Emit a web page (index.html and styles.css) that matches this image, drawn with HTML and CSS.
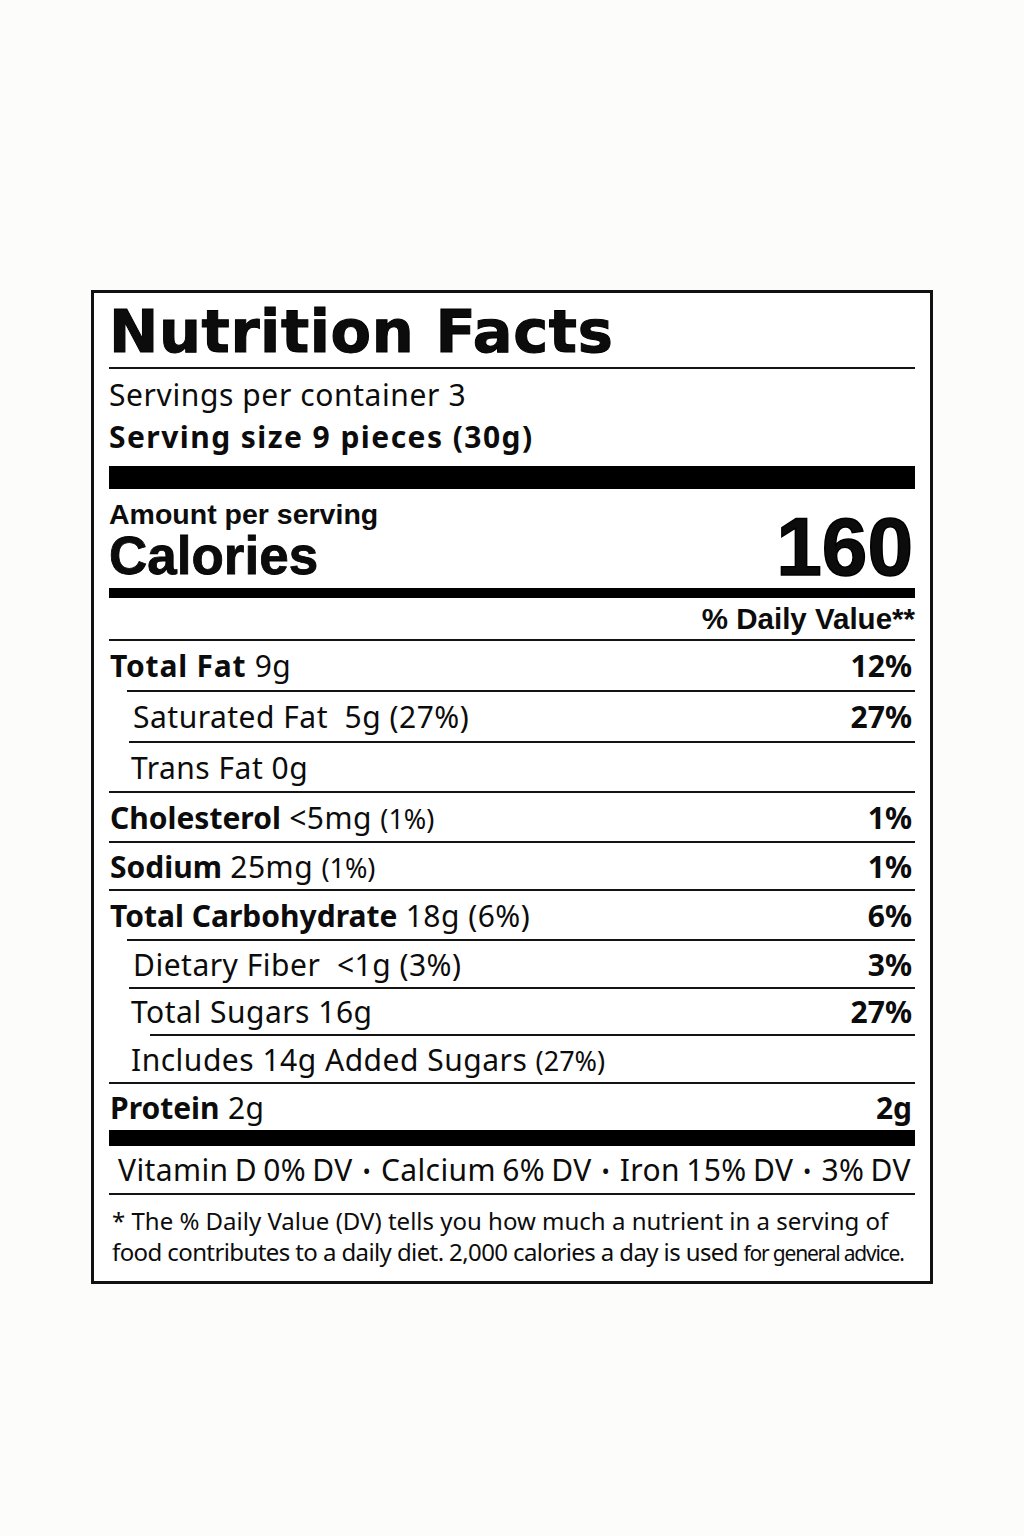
FILE: index.html
```html
<!DOCTYPE html>
<html lang="en">
<head>
<meta charset="utf-8">
<title>Nutrition Facts</title>
<link rel="stylesheet" href="styles.css">
</head>
<body>
<section class="label">
  <h1 class="title">Nutrition Facts</h1>
  <div class="rule"></div>
  <div class="serving">
    <p class="servings">Servings per container 3</p>
    <p class="size">Serving size 9 pieces (30g)</p>
  </div>
  <div class="bar bar--thick"></div>
  <div class="calories">
    <div class="cal-left">
      <p class="amount">Amount per serving</p>
      <p class="cal-word">Calories</p>
    </div>
    <p class="cal-num">160</p>
  </div>
  <div class="bar bar--mid"></div>
  <p class="dv-head">% Daily Value**</p>
  <div class="rule"></div>

  <div class="row row--h49"><span class="name"><b class="wide">Total Fat</b> 9g</span><b class="pct">12%</b></div>
  <div class="rule rule--sub"></div>
  <div class="row row--sub row--h49"><span class="name">Saturated Fat&nbsp; 5g (27%)</span><b class="pct">27%</b></div>
  <div class="rule rule--sub2"></div>
  <div class="row row--sub2 row--h48"><span class="name">Trans Fat 0g</span></div>
  <div class="rule"></div>
  <div class="row row--h48"><span class="name"><b>Cholesterol</b> &lt;5mg <small>(1%)</small></span><b class="pct">1%</b></div>
  <div class="rule"></div>
  <div class="row row--h46"><span class="name"><b>Sodium</b> 25mg <small>(1%)</small></span><b class="pct">1%</b></div>
  <div class="rule"></div>
  <div class="row row--h48"><span class="name"><b>Total Carbohydrate</b> 18g (6%)</span><b class="pct">6%</b></div>
  <div class="rule rule--sub"></div>
  <div class="row row--sub row--h46"><span class="name">Dietary Fiber&nbsp; &lt;1g (3%)</span><b class="pct">3%</b></div>
  <div class="rule rule--sub2"></div>
  <div class="row row--sub2 row--h45"><span class="name">Total Sugars 16g</span><b class="pct">27%</b></div>
  <div class="rule rule--deep"></div>
  <div class="row row--sub2 row--h46"><span class="name">Includes 14g Added Sugars <small>(27%)</small></span></div>
  <div class="rule"></div>
  <div class="row row--h46"><span class="name"><b>Protein</b> 2g</span><b class="pct">2g</b></div>
  <div class="bar bar--bottom"></div>

  <div class="vitamins">
    <span>Vitamin D 0% DV</span><span class="dot">•</span>
    <span>Calcium 6% DV</span><span class="dot">•</span>
    <span>Iron 15% DV</span><span class="dot">•</span>
    <span>3% DV</span>
  </div>
  <div class="rule"></div>
  <p class="foot">* The % Daily Value (DV) tells you how much a nutrient in a serving of<br><span class="line2">food contributes to a daily diet. 2,000 calories a day is used <span class="tight">for general advice.</span></span></p>
</section>
</body>
</html>
```
FILE: styles.css
```css
* { box-sizing: border-box; }
html, body { margin: 0; padding: 0; }
body {
  background: #fcfcfa;
  color: #0c0c0c;
  font-family: "Noto Sans", "Open Sans", Arial, sans-serif;
  width: 1024px;
  min-height: 1536px;
}
p, h1 { margin: 0; }
.label {
  margin: 290px 0 0 91px;
  width: 842px;
  border: 3px solid #111;
  padding: 0 15px;
  background: #fff;
}
.title {
  height: 74px;
  display: flex;
  align-items: flex-end;
  padding-bottom: 6px;
  font-family: "DejaVu Sans", sans-serif;
  font-weight: 700;
  font-size: 59px;
  line-height: 1;
  letter-spacing: 0.6px;
  white-space: nowrap;
  -webkit-text-stroke: 1px #000;
}
.rule { height: 2px; background: #141414; }
.rule--sub { margin-left: 18px; }
.rule--sub2 { margin-left: 20px; }
.rule--deep { margin-left: 41px; }
.serving {
  height: 97px;
  display: flex;
  flex-direction: column;
  justify-content: center;
  padding-bottom: 4px;
}
.servings { font-size: 30px; line-height: 42px; letter-spacing: 0.6px; }
.size { font-size: 30px; font-weight: 700; line-height: 42px; letter-spacing: 1.45px; }
.bar { background: #000; }
.bar--thick { height: 23px; }
.bar--mid { height: 10px; }
.bar--bottom { height: 16px; }
.calories {
  height: 99px;
  display: flex;
  justify-content: space-between;
  align-items: flex-end;
}
.cal-left { display: flex; flex-direction: column; padding-bottom: 6px; }
.amount {
  font-family: "Liberation Sans", Arial, sans-serif;
  font-weight: 700;
  font-size: 28.5px;
  line-height: 30px;
  margin-bottom: 1px;
}
.cal-word {
  font-family: "Liberation Sans", Arial, sans-serif;
  font-weight: 700;
  font-size: 53px;
  line-height: 52px;
  -webkit-text-stroke: 0.8px #000;
}
.cal-num {
  font-family: "Liberation Sans", Arial, sans-serif;
  font-weight: 700;
  font-size: 82px;
  line-height: 82px;
  padding-right: 2px;
  -webkit-text-stroke: 1.5px #000;
}
.dv-head {
  height: 41px;
  display: flex;
  align-items: center;
  justify-content: flex-end;
  font-family: "Liberation Sans", Arial, sans-serif;
  font-weight: 700;
  font-size: 29.5px;
}
.row {
  height: 47px;
  display: flex;
  align-items: center;
  justify-content: space-between;
  padding: 0 3px 0 1px;
  font-size: 30px;
}
.row--h49 { height: 49px; }
.row--h48 { height: 48px; }
.row--h46 { height: 46px; }
.row--h45 { height: 45px; }
.row .name { letter-spacing: 0.5px; }
.row b { font-weight: 700; letter-spacing: 0; }
.row b.wide { letter-spacing: 0.8px; }
.row small { font-size: 27px; letter-spacing: 0; }
.row--sub { padding-left: 6px; margin-left: 18px; }
.row--sub2 { padding-left: 2px; margin-left: 20px; }
.name { white-space: nowrap; }
.pct { font-weight: 700; font-size: 30px; }
.vitamins {
  height: 47px;
  display: flex;
  align-items: center;
  justify-content: space-between;
  padding: 0 4px 0 9px;
  font-size: 30px;
  letter-spacing: 0.4px;
  word-spacing: -2px;
}
.dot { font-size: 22px; }
.foot {
  height: 86px;
  padding: 10px 0 0 3px;
  font-size: 24px;
  line-height: 31px;
  white-space: nowrap;
}
.line2 { letter-spacing: -0.6px; }
.tight { letter-spacing: -1.2px; font-size: 21px; }
```
